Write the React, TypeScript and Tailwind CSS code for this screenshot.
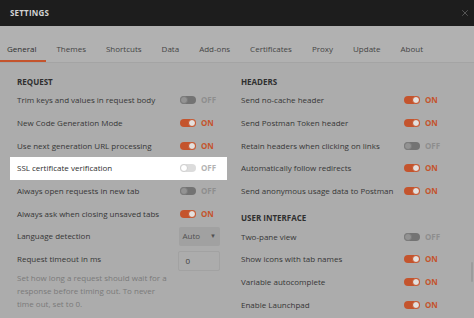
import { X } from "lucide-react";

type Row = { label: string; on?: boolean; highlight?: boolean };

const tabs = ["General", "Themes", "Shortcuts", "Data", "Add-ons", "Certificates", "Proxy", "Update", "About"];

const leftRows: Row[] = [
  { label: "Trim keys and values in request body", on: false },
  { label: "New Code Generation Mode", on: true },
  { label: "Use next generation URL processing", on: true },
  { label: "SSL certificate verification", on: false, highlight: true },
  { label: "Always open requests in new tab", on: false },
  { label: "Always ask when closing unsaved tabs", on: true },
];

const headerRows: Row[] = [
  { label: "Send no-cache header", on: true },
  { label: "Send Postman Token header", on: true },
  { label: "Retain headers when clicking on links", on: false },
  { label: "Automatically follow redirects", on: true },
  { label: "Send anonymous usage data to Postman", on: true },
];

const uiRows: Row[] = [
  { label: "Two-pane view", on: false },
  { label: "Show icons with tab names", on: true },
  { label: "Variable autocomplete", on: true },
  { label: "Enable Launchpad", on: true },
];

const Toggle = ({ on, light }: { on?: boolean; light?: boolean }) => {
  if (on) {
    return (
      <div className="flex items-center">
        <div className="flex justify-end w-[16px] h-[8px] rounded-full bg-[#c4542d]">
          <div className="w-[8px] h-[8px] rounded-full bg-[#e4e0de] border border-[#c4542d]" />
        </div>
        <span className="ml-[5px] text-[8px] font-bold text-[#c4542d]">ON</span>
      </div>
    );
  }
  return (
    <div className="flex items-center">
      <div
        className={
          light
            ? "flex w-[16px] h-[8px] rounded-full bg-[#dcdcdc]"
            : "flex w-[16px] h-[8px] rounded-full bg-[#737373]"
        }
      >
        <div
          className={
            light
              ? "w-[8px] h-[8px] rounded-full bg-white border border-[#cfcfcf]"
              : "w-[8px] h-[8px] rounded-full bg-[#939393] border border-[#7c7c7c]"
          }
        />
      </div>
      <span
        className={
          light
            ? "ml-[5px] text-[8px] font-bold text-[#b3b3b3]"
            : "ml-[5px] text-[8px] font-bold text-[#8e8e8e]"
        }
      >
        OFF
      </span>
    </div>
  );
};

const SettingRow = ({ row }: { row: Row }) => (
  <div
    className={
      row.highlight
        ? "flex items-center h-[22.7px] px-[7px] bg-white text-[#2e2e2e]"
        : "flex items-center h-[22.7px] px-[7px] text-[#363636]"
    }
  >
    <p className="w-[163px] whitespace-nowrap">{row.label}</p>
    <Toggle on={row.on} light={row.highlight} />
  </div>
);

const SectionTitle = ({ title, top }: { title: string; top?: boolean }) => (
  <div
    className={
      top
        ? "flex items-center h-[14px] px-[7px] font-bold text-[#2f2f2f]"
        : "flex items-center h-[14px] mt-[9px] px-[7px] font-bold text-[#2f2f2f]"
    }
  >
    {title}
  </div>
);

export default function App() {
  return (
    <div
      className="relative w-[474px] h-[318px] overflow-hidden bg-[#acacac] text-[8px]"
      style={{ fontFamily: '"Open Sans", "Noto Sans", sans-serif' }}
    >
      <div className="flex items-center justify-between h-[26px] pl-[10px] pr-[4px] bg-[#1d1d1d]">
        <span className="font-bold text-[#d2d2d2] tracking-[0.2px]">SETTINGS</span>
        <X className="w-[10px] h-[10px] text-[#777777]" strokeWidth={1.5} />
      </div>

      <div className="flex items-end h-[37px] bg-[#b1b1b1] border-b border-[#a4a4a4]">
        {tabs.map((tab, i) => (
          <div
            key={tab}
            className={
              i === 0
                ? "pl-[7px] pr-[10px] pb-[5px] border-b-2 border-[#c4542d] text-[#2f2f2f]"
                : "px-[10px] pb-[5px] border-b-2 border-transparent text-[#454545]"
            }
          >
            {tab}
          </div>
        ))}
      </div>

      <div className="flex pt-[12px]">
        <div className="w-[217px] ml-[10px]">
          <SectionTitle title="REQUEST" top />
          {leftRows.map((row) => (
            <SettingRow key={row.label} row={row} />
          ))}
          <div className="flex items-center h-[22.7px] px-[7px] text-[#363636]">
            <p className="w-[164px] whitespace-nowrap">Language detection</p>
            <div className="flex items-center justify-between w-[42px] h-[19px] px-[4px] rounded-[2px] bg-[#a1a1a1] text-[#505050]">
              <span>Auto</span>
              <span className="text-[6px]">▼</span>
            </div>
          </div>
          <div className="flex items-end h-[22.7px] px-[7px] text-[#363636]">
            <p className="w-[164px] self-center whitespace-nowrap">Request timeout in ms</p>
            <div className="flex items-center w-[42px] h-[20px] px-[6px] rounded-[2px] border border-[#a2a2a2] text-[#404040]">
              0
            </div>
          </div>
          <div className="px-[7px] leading-[13px] text-[#7a7a7a]">
            <p>Set how long a request should wait for a</p>
            <p>response before timing out. To never</p>
            <p>time out, set to 0.</p>
          </div>
        </div>

        <div className="w-[230px] ml-[7px]">
          <SectionTitle title="HEADERS" top />
          {headerRows.map((row) => (
            <SettingRow key={row.label} row={row} />
          ))}
          <SectionTitle title="USER INTERFACE" />
          {uiRows.map((row) => (
            <SettingRow key={row.label} row={row} />
          ))}
        </div>
      </div>

      <div className="absolute right-[1px] top-[262px] w-[2px] h-[20px] rounded-full bg-[#9c9c9c]" />
    </div>
  );
}
